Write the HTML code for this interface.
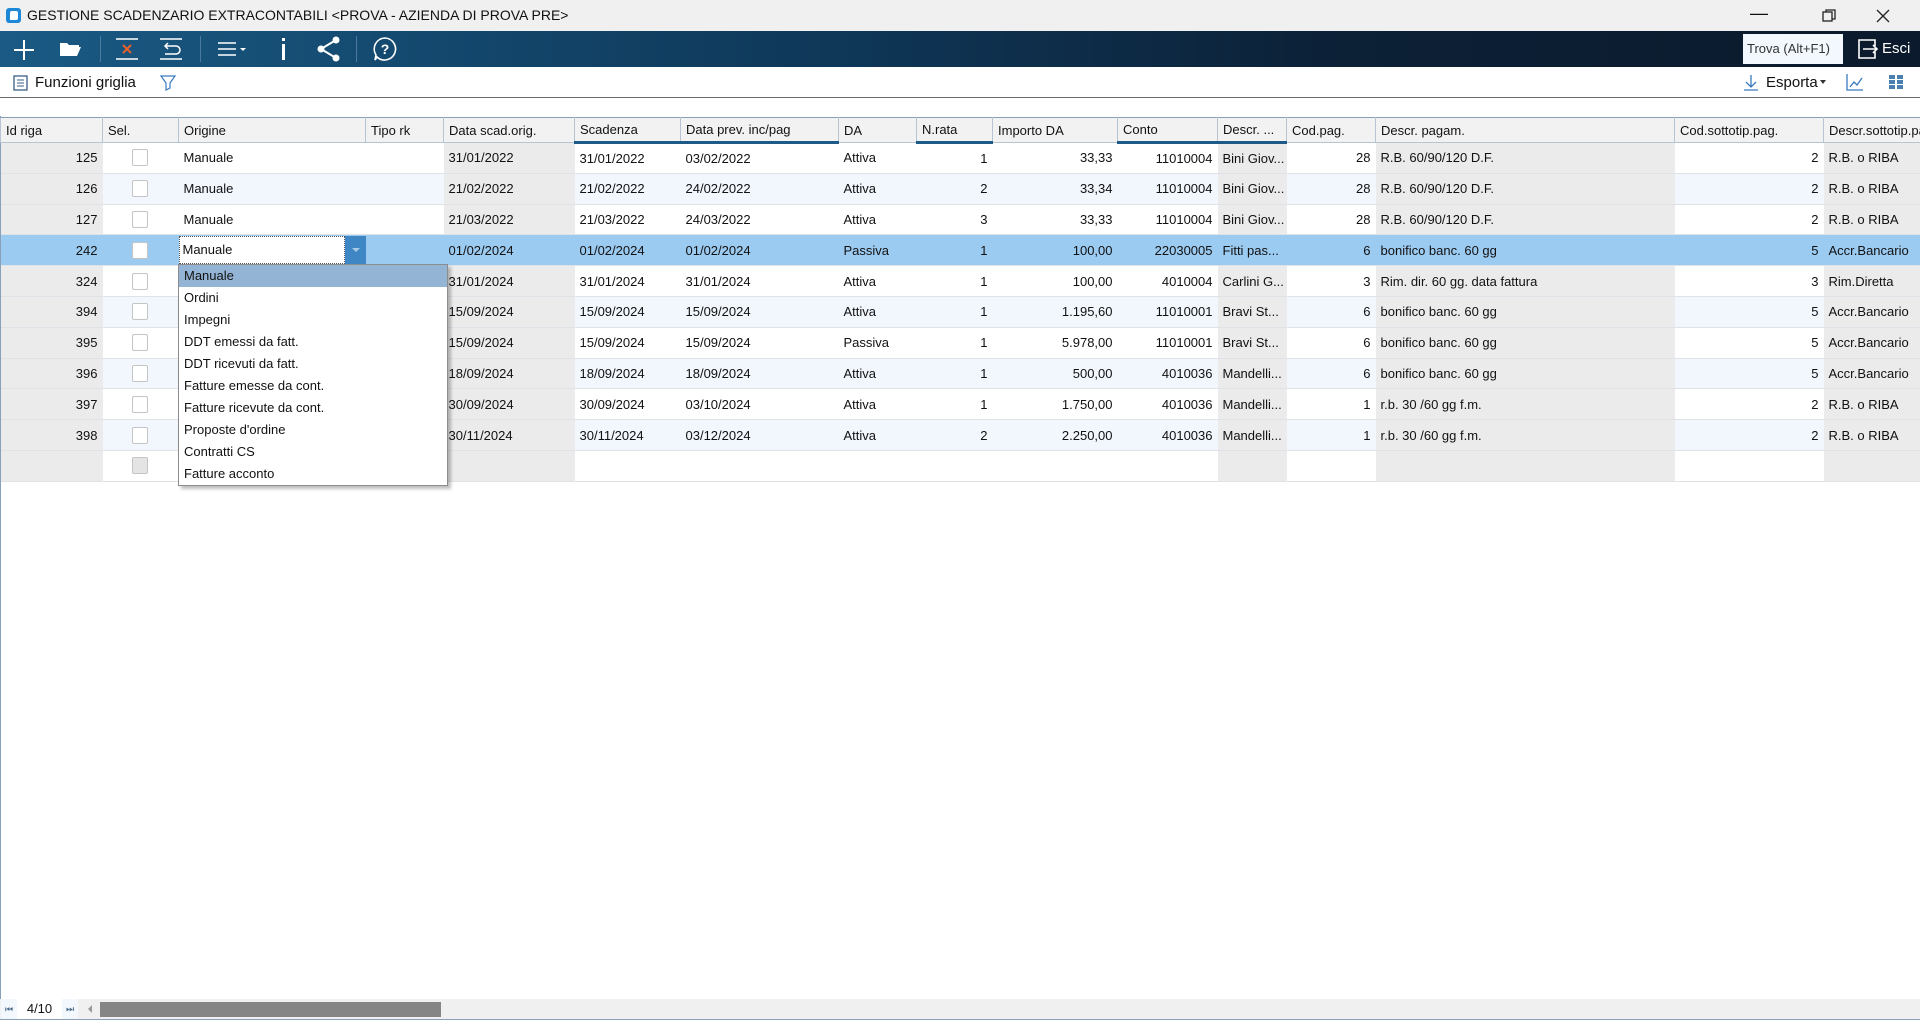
<!DOCTYPE html>
<html><head><meta charset="utf-8"><style>
*{box-sizing:border-box;margin:0;padding:0}
body{width:1920px;height:1020px;overflow:hidden;background:#fff;font-family:"Liberation Sans",sans-serif;font-size:13px;color:#111;position:relative}
.title{position:absolute;left:0;top:0;width:1920px;height:31px;background:#f0f0f0;font-size:14px;line-height:31px}
.tb{position:absolute;left:0;top:31px;width:1920px;height:36px;background:linear-gradient(90deg,#1a5a84 0%,#0f3a5c 40%,#0c2036 70%,#0b1a2c 100%)}
.tb2{position:absolute;left:0;top:67px;width:1920px;height:31px;background:#fff;border-bottom:1px solid #6b6b6b}
table{position:absolute;left:0;top:117px;border-collapse:collapse;table-layout:fixed;width:1920px}
td,th{height:30.8px;padding:0 5px;white-space:nowrap;overflow:hidden;border-bottom:1px solid #dfe3e8;font-weight:normal;text-align:left}
th{height:25px;background:#f2f2f2;border:1px solid #b7c4d3;border-top:1px solid #8aa0b8;font-size:13px;vertical-align:middle}
th.u{border-bottom:3px solid #1e5a88}
td.r{text-align:right}
td.g{background:#ebebeb}
tr.a td{background:#f1f7fd}
tr.a td.g{background:#ebebeb}
tr.s td{background:#9ccbf2}
.cb{display:inline-block;width:16px;height:17px;border:1px solid #c4c4c4;border-radius:2px;background:#fff;vertical-align:middle;margin-left:24px}
.dd{position:absolute;left:178px;top:264px;width:270px;height:222px;background:#fff;border:1px solid #8c8c8c;box-shadow:3px 3px 3px rgba(0,0,0,.25)}
.dd div{height:22px;line-height:22px;padding-left:5px}
.ic{position:absolute}
</style></head><body>
<div class="title"><span style="position:absolute;left:6px;top:8px;width:15px;height:15px;background:#1e88d8;border-radius:3px"></span><span style="position:absolute;left:10px;top:11px;width:8px;height:9px;background:#fff;border-radius:2px 2px 2px 0"></span><span style="position:absolute;left:27px">GESTIONE SCADENZARIO EXTRACONTABILI &lt;PROVA - AZIENDA DI PROVA PRE&gt;</span>
<span style="position:absolute;left:1750px;top:-2px;font-size:18px">—</span>
<svg class="ic" style="left:1822px;top:9px" width="14" height="14"><rect x="1" y="3" width="9" height="9" fill="none" stroke="#222" stroke-width="1.3"/><path d="M4 3V1h9v9h-3" fill="none" stroke="#222" stroke-width="1.3"/></svg>
<svg class="ic" style="left:1876px;top:9px" width="14" height="14"><path d="M1 1L13 13M13 1L1 13" stroke="#222" stroke-width="1.3"/></svg>
</div>
<div class="tb">
<svg class="ic" style="left:12px;top:7px" width="24" height="24"><path d="M12 2V22M2 12H22" stroke="#fff" stroke-width="2"/></svg>
<svg class="ic" style="left:58px;top:9px" width="24" height="18"><path d="M2 3h7l2 2h10v2H7L3 16H2z M7 7h16l-4 9H3z" fill="#fff"/></svg>
<div style="position:absolute;left:100px;top:5px;width:1px;height:26px;background:#4b7a9e"></div>
<svg class="ic" style="left:114px;top:5px" width="26" height="26"><path d="M2 3H24M2 23H24" stroke="#fff" stroke-width="1.5"/><path d="M9 9l8 8M17 9l-8 8" stroke="#e8602c" stroke-width="2"/></svg>
<svg class="ic" style="left:158px;top:5px" width="26" height="26"><path d="M2 3H24M2 23H24" stroke="#fff" stroke-width="1.5"/><path d="M7 10H18a4 4 0 0 1 0 8H7M10 7l-3 3 3 3" fill="none" stroke="#fff" stroke-width="1.5"/></svg>
<div style="position:absolute;left:200px;top:5px;width:1px;height:26px;background:#4b7a9e"></div>
<svg class="ic" style="left:216px;top:8px" width="36" height="20"><path d="M2 4H20M2 10H20M2 16H20" stroke="#fff" stroke-width="1.6"/><path d="M24 9h6l-3 3z" fill="#fff"/></svg>
<div style="position:absolute;left:282px;top:7px;width:3px;height:3px;background:#fff"></div><div style="position:absolute;left:282px;top:13px;width:3px;height:16px;background:#fff"></div>
<svg class="ic" style="left:316px;top:5px" width="26" height="26"><path d="M20 4L5 13L20 22" fill="none" stroke="#fff" stroke-width="2"/><circle cx="20" cy="4" r="3.5" fill="#fff"/><circle cx="5" cy="13" r="3.5" fill="#fff"/><circle cx="20" cy="22" r="3.5" fill="#fff"/></svg>
<div style="position:absolute;left:356px;top:5px;width:1px;height:26px;background:#4b7a9e"></div>
<svg class="ic" style="left:372px;top:5px" width="26" height="26"><path d="M13 2a11 11 0 1 1-8 19L3 24l1-5A11 11 0 0 1 13 2z" fill="none" stroke="#fff" stroke-width="1.6"/><text x="13" y="18" fill="#fff" font-size="14" font-weight="bold" text-anchor="middle" font-family="Liberation Sans">?</text></svg>
<div style="position:absolute;left:1743px;top:3px;width:100px;height:30px;background:#f2f8fd;color:#333;line-height:30px;padding-left:4px;font-size:13px">Trova (Alt+F1)</div>
<svg class="ic" style="left:1856px;top:6px" width="24" height="24"><path d="M9 3H3v18h16v-6M19 9V3H9" fill="none" stroke="#fff" stroke-width="1.6"/><path d="M7 12h14M17 8l4 4-4 4" fill="none" stroke="#fff" stroke-width="1.6"/></svg>
<span style="position:absolute;left:1882px;top:9px;color:#fff;font-size:15px">Esci</span>
</div>
<div class="tb2">
<svg class="ic" style="left:13px;top:8px" width="15" height="16"><rect x="1" y="1" width="13" height="14" fill="none" stroke="#3a5f86" stroke-width="1.3"/><path d="M4 5h7M4 8h7M4 11h7" stroke="#3a5f86"/></svg>
<span style="position:absolute;left:35px;top:7px;font-size:15px">Funzioni griglia</span>
<svg class="ic" style="left:160px;top:7px" width="16" height="18"><path d="M1 2h14l-5 7v5l-4 2V9z" fill="none" stroke="#3a7bbf" stroke-width="1.2"/></svg>
<svg class="ic" style="left:1743px;top:7px" width="16" height="18"><path d="M8 1v12M3 8l5 5 5-5M1 16h14" fill="none" stroke="#3a7bbf" stroke-width="1.3"/></svg>
<span style="position:absolute;left:1766px;top:7px;font-size:15px">Esporta</span><span style="position:absolute;left:1820px;top:13px;border:3px solid transparent;border-top:4px solid #333"></span>
<svg class="ic" style="left:1846px;top:6px" width="18" height="18"><path d="M1 1v16h16" fill="none" stroke="#3a7bbf" stroke-width="1.3"/><path d="M4 14l4-5 3 3 5-7" fill="none" stroke="#3a7bbf" stroke-width="1.3"/></svg>
<svg class="ic" style="left:1889px;top:8px" width="15" height="15"><g fill="#4a7fb0"><rect x="0" y="0" width="6" height="4"/><rect x="8" y="0" width="6" height="4"/><rect x="0" y="5" width="6" height="4"/><rect x="8" y="5" width="6" height="4"/><rect x="0" y="10" width="6" height="4"/><rect x="8" y="10" width="6" height="4"/></g></svg>
</div>
<div style="position:absolute;left:0;top:116px;width:1px;height:904px;background:#8aa0b8"></div>
<table>
<colgroup><col style="width:102px"><col style="width:76px"><col style="width:187px"><col style="width:78px"><col style="width:131px"><col style="width:106px"><col style="width:158px"><col style="width:78px"><col style="width:76px"><col style="width:125px"><col style="width:100px"><col style="width:69px"><col style="width:89px"><col style="width:299px"><col style="width:149px"><col style="width:97px"></colgroup>
<tr><th>Id riga</th><th>Sel.</th><th>Origine</th><th>Tipo rk</th><th>Data scad.orig.</th><th class="u">Scadenza</th><th class="u">Data prev. inc/pag</th><th>DA</th><th class="u">N.rata</th><th>Importo DA</th><th class="u">Conto</th><th class="u">Descr. ...</th><th>Cod.pag.</th><th>Descr. pagam.</th><th>Cod.sottotip.pag.</th><th>Descr.sottotip.pag.</th></tr>
<tr><td class="g r">125</td><td><span class="cb"></span></td><td>Manuale</td><td></td><td class="g">31/01/2022</td><td>31/01/2022</td><td>03/02/2022</td><td>Attiva</td><td class="r">1</td><td class="r">33,33</td><td class="r">11010004</td><td class="g">Bini Giov...</td><td class="r">28</td><td class="g">R.B. 60/90/120 D.F.</td><td class="r">2</td><td class="g">R.B. o RIBA</td></tr>
<tr class="a"><td class="g r">126</td><td><span class="cb"></span></td><td>Manuale</td><td></td><td class="g">21/02/2022</td><td>21/02/2022</td><td>24/02/2022</td><td>Attiva</td><td class="r">2</td><td class="r">33,34</td><td class="r">11010004</td><td class="g">Bini Giov...</td><td class="r">28</td><td class="g">R.B. 60/90/120 D.F.</td><td class="r">2</td><td class="g">R.B. o RIBA</td></tr>
<tr><td class="g r">127</td><td><span class="cb"></span></td><td>Manuale</td><td></td><td class="g">21/03/2022</td><td>21/03/2022</td><td>24/03/2022</td><td>Attiva</td><td class="r">3</td><td class="r">33,33</td><td class="r">11010004</td><td class="g">Bini Giov...</td><td class="r">28</td><td class="g">R.B. 60/90/120 D.F.</td><td class="r">2</td><td class="g">R.B. o RIBA</td></tr>
<tr class="s"><td class="r">242</td><td><span class="cb"></span></td><td style="padding:0;position:relative"><div style="position:absolute;left:0;top:1px;width:166px;height:28px;background:#fff;border:1px dotted #555;line-height:26px;padding-left:3px">Manuale</div><div style="position:absolute;left:166px;top:1px;width:21px;height:29px;background:#3f86c4"><span style="position:absolute;left:7px;top:12px;border:4px solid transparent;border-top:4px solid #a9c9e6"></span></div></td><td></td><td>01/02/2024</td><td>01/02/2024</td><td>01/02/2024</td><td>Passiva</td><td class="r">1</td><td class="r">100,00</td><td class="r">22030005</td><td>Fitti pas...</td><td class="r">6</td><td>bonifico banc. 60 gg</td><td class="r">5</td><td>Accr.Bancario</td></tr>
<tr><td class="g r">324</td><td><span class="cb"></span></td><td></td><td></td><td class="g">31/01/2024</td><td>31/01/2024</td><td>31/01/2024</td><td>Attiva</td><td class="r">1</td><td class="r">100,00</td><td class="r">4010004</td><td class="g">Carlini G...</td><td class="r">3</td><td class="g">Rim. dir. 60 gg. data fattura</td><td class="r">3</td><td class="g">Rim.Diretta</td></tr>
<tr class="a"><td class="g r">394</td><td><span class="cb"></span></td><td></td><td></td><td class="g">15/09/2024</td><td>15/09/2024</td><td>15/09/2024</td><td>Attiva</td><td class="r">1</td><td class="r">1.195,60</td><td class="r">11010001</td><td class="g">Bravi St...</td><td class="r">6</td><td class="g">bonifico banc. 60 gg</td><td class="r">5</td><td class="g">Accr.Bancario</td></tr>
<tr><td class="g r">395</td><td><span class="cb"></span></td><td></td><td></td><td class="g">15/09/2024</td><td>15/09/2024</td><td>15/09/2024</td><td>Passiva</td><td class="r">1</td><td class="r">5.978,00</td><td class="r">11010001</td><td class="g">Bravi St...</td><td class="r">6</td><td class="g">bonifico banc. 60 gg</td><td class="r">5</td><td class="g">Accr.Bancario</td></tr>
<tr class="a"><td class="g r">396</td><td><span class="cb"></span></td><td></td><td></td><td class="g">18/09/2024</td><td>18/09/2024</td><td>18/09/2024</td><td>Attiva</td><td class="r">1</td><td class="r">500,00</td><td class="r">4010036</td><td class="g">Mandelli...</td><td class="r">6</td><td class="g">bonifico banc. 60 gg</td><td class="r">5</td><td class="g">Accr.Bancario</td></tr>
<tr><td class="g r">397</td><td><span class="cb"></span></td><td></td><td></td><td class="g">30/09/2024</td><td>30/09/2024</td><td>03/10/2024</td><td>Attiva</td><td class="r">1</td><td class="r">1.750,00</td><td class="r">4010036</td><td class="g">Mandelli...</td><td class="r">1</td><td class="g">r.b. 30 /60 gg f.m.</td><td class="r">2</td><td class="g">R.B. o RIBA</td></tr>
<tr class="a"><td class="g r">398</td><td><span class="cb"></span></td><td></td><td></td><td class="g">30/11/2024</td><td>30/11/2024</td><td>03/12/2024</td><td>Attiva</td><td class="r">2</td><td class="r">2.250,00</td><td class="r">4010036</td><td class="g">Mandelli...</td><td class="r">1</td><td class="g">r.b. 30 /60 gg f.m.</td><td class="r">2</td><td class="g">R.B. o RIBA</td></tr>
<tr><td class="g"></td><td><span class="cb" style="background:#e4e4e4"></span></td><td></td><td></td><td class="g"></td><td></td><td></td><td></td><td></td><td></td><td></td><td class="g"></td><td></td><td class="g"></td><td></td><td class="g"></td></tr>
</table>
<div class="dd"><div style="background:#94b4d6">Manuale</div><div>Ordini</div><div>Impegni</div><div>DDT emessi da fatt.</div><div>DDT ricevuti da fatt.</div><div>Fatture emesse da cont.</div><div>Fatture ricevute da cont.</div><div>Proposte d'ordine</div><div>Contratti CS</div><div>Fatture acconto</div></div>
<div style="position:absolute;left:0;top:999px;width:1920px;height:21px;background:#f0f0f0;border-bottom:1px solid #8aa0b8"></div>
<div style="position:absolute;left:1px;top:999px;width:16px;height:20px;background:#f2f8fd;font-size:9px;color:#4a6a8a;line-height:20px;text-align:center">⏮</div>
<div style="position:absolute;left:17px;top:999px;width:45px;height:20px;background:#fff;line-height:20px;text-align:center">4/10</div>
<div style="position:absolute;left:62px;top:999px;width:16px;height:20px;background:#f2f8fd;font-size:9px;color:#4a6a8a;line-height:20px;text-align:center">⏭</div>
<div style="position:absolute;left:84px;top:1005px;border:4px solid transparent;border-right:4px solid #999"></div>
<div style="position:absolute;left:100px;top:1002px;width:341px;height:15px;background:#858585"></div>
</body></html>
